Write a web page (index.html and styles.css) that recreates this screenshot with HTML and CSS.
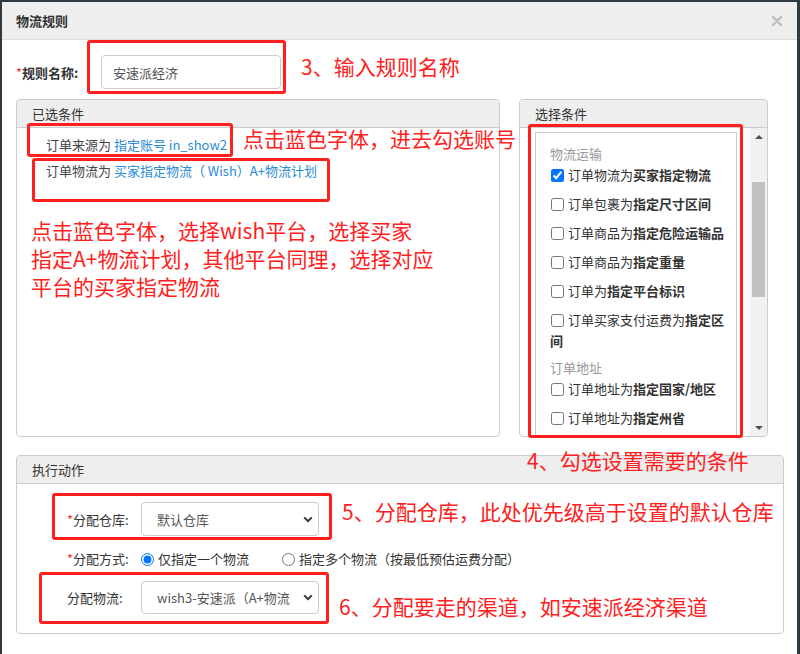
FILE: index.html
```html
<!DOCTYPE html>
<html lang="zh-CN">
<head>
<meta charset="utf-8">
<title>物流规则</title>
<link rel="stylesheet" href="styles.css">
</head>
<body>
<div class="dialog">
  <div class="dlg-header">
    <span class="dlg-title">物流规则</span>
    <svg class="dlg-close" width="10" height="10" viewBox="0 0 10 10"><path d="M1 1L9 9M9 1L1 9" stroke="#bdbdbd" stroke-width="2.4" stroke-linecap="round"/></svg>
  </div>
  <div class="dlg-body">
    <div class="name-row">
      <div class="name-label"><span class="req">*</span>规则名称:</div>
      <div class="name-input">安速派经济</div>
    </div>
    <div class="panels">
      <div class="panel panel-left">
        <div class="panel-head">已选条件</div>
        <div class="chosen">
          <div>订单来源为 <span class="link">指定账号 in_show2</span></div>
          <div>订单物流为 <span class="link">买家指定物流（ Wish）A+物流计划</span></div>
        </div>
      </div>
      <div class="panel panel-right">
        <div class="panel-head">选择条件</div>
        <div class="cond-body">
          <div class="cond-list">
            <div class="group">物流运输</div>
            <div class="item"><input type="checkbox" checked>订单物流为<b>买家指定物流</b></div>
            <div class="item"><input type="checkbox">订单包裹为<b>指定尺寸区间</b></div>
            <div class="item"><input type="checkbox">订单商品为<b>指定危险运输品</b></div>
            <div class="item"><input type="checkbox">订单商品为<b>指定重量</b></div>
            <div class="item"><input type="checkbox">订单为<b>指定平台标识</b></div>
            <div class="item"><input type="checkbox">订单买家支付运费为<b>指定区间</b></div>
            <div class="group group-2">订单地址</div>
            <div class="item"><input type="checkbox">订单地址为<b>指定国家/地区</b></div>
            <div class="item"><input type="checkbox">订单地址为<b>指定州省</b></div>
          </div>
          <div class="scrollbar">
            <div class="sb-btn"><span class="tri-up"></span></div>
            <div class="sb-thumb"></div>
            <div class="sb-fill"></div>
            <div class="sb-btn"><span class="tri-down"></span></div>
          </div>
        </div>
      </div>
    </div>
    <div class="panel panel-action">
      <div class="panel-head">执行动作</div>
      <div class="action-body">
        <div class="arow">
          <div class="alabel"><span class="req">*</span>分配仓库:</div>
          <div class="select"><span>默认仓库</span><svg width="10" height="7" viewBox="0 0 10 7"><path d="M1.2 1.4L5 5.2L8.8 1.4" fill="none" stroke="#333" stroke-width="2"/></svg></div>
        </div>
        <div class="arow arow-radio">
          <div class="alabel"><span class="req">*</span>分配方式:</div>
          <label class="radio"><input type="radio" name="m" checked>仅指定一个物流</label>
          <label class="radio radio-2"><input type="radio" name="m">指定多个物流（按最低预估运费分配）</label>
        </div>
        <div class="arow arow-last">
          <div class="alabel">分配物流:</div>
          <div class="select"><span>wish3-安速派（A+物流</span><svg width="10" height="7" viewBox="0 0 10 7"><path d="M1.2 1.4L5 5.2L8.8 1.4" fill="none" stroke="#333" stroke-width="2"/></svg></div>
        </div>
      </div>
    </div>
  </div>
</div>

<div class="mark box3"></div>
<div class="mark box1"></div>
<div class="mark box2"></div>
<div class="mark box4"></div>
<div class="mark box5"></div>
<div class="mark box6"></div>

<div class="note n3">3、输入规则名称</div>
<div class="note n1">点击蓝色字体，进去勾选账号</div>
<div class="note nbig">点击蓝色字体，选择wish平台，选择买家<br>指定A+物流计划，其他平台同理，选择对应<br>平台的买家指定物流</div>
<div class="note n4">4、勾选设置需要的条件</div>
<div class="note n5">5、分配仓库，此处优先级高于设置的默认仓库</div>
<div class="note n6">6、分配要走的渠道，如安速派经济渠道</div>
</body>
</html>
```

FILE: styles.css
```css
html, body {
  margin: 0;
  padding: 0;
}
body {
  background: #2e3a42;
  font-family: "Noto Sans CJK SC", "Open Sans", sans-serif;
  font-size: 13px;
  color: #333;
  width: 800px;
  height: 654px;
  overflow: hidden;
}
.dialog {
  margin: 2px 3px 0 2px;
  height: 652px;
  background: #fff;
  overflow: hidden;
}
.dlg-header {
  height: 37px;
  background: #eeeeee;
  border-bottom: 1px solid #dedede;
  display: flex;
  align-items: center;
  justify-content: space-between;
  padding: 0 15px 0 14px;
}
.dlg-title {
  font-weight: bold;
  color: #333;
}
.dlg-body {
  padding-left: 14px;
}
.req {
  color: #e33;
  font-weight: normal;
}
.name-row {
  display: flex;
  align-items: center;
  margin-top: 15px;
  height: 34px;
}
.name-label {
  width: 85px;
  font-weight: bold;
}
.name-input {
  width: 180px;
  height: 34px;
  box-sizing: border-box;
  border: 1px solid #cccccc;
  border-radius: 4px;
  padding-left: 11px;
  display: flex;
  align-items: center;
  color: #555;
}
.panels {
  display: flex;
  gap: 19px;
  margin-top: 10px;
  height: 338px;
}
.panel {
  border: 1px solid #cccccc;
  border-radius: 4px;
  box-sizing: border-box;
  overflow: hidden;
  display: flex;
  flex-direction: column;
}
.panel-left { width: 484px; }
.panel-right { width: 249px; }
.panel-head {
  height: 27px;
  line-height: 27px;
  background: #eeeeee;
  border-bottom: 1px solid #cccccc;
  padding-left: 15px;
  color: #333;
  flex: none;
}
.chosen {
  padding: 4px 0 0 29px;
  line-height: 26px;
  color: #444;
}
.link {
  color: #2a8bd4;
}
.cond-body {
  flex: 1;
  min-height: 0;
  display: flex;
}
.cond-list {
  width: 202px;
  box-sizing: border-box;
  margin: 4px 0 0 15px;
  border: 1px solid #cccccc;
  border-bottom: none;
  padding: 0 9px 0 14px;
  overflow: hidden;
  flex: none;
}
.group {
  color: #999;
  padding-top: 10px;
  line-height: 21px;
}
.group-2 {
  padding-top: 0;
  margin-top: -2px;
}
.item {
  line-height: 21px;
  margin-bottom: 8px;
  color: #333;
}
.item b {
  font-weight: bold;
}
.item input {
  width: 13px;
  height: 13px;
  margin: 0 4px 0 1px;
  vertical-align: -2px;
}
.scrollbar {
  width: 17px;
  margin-left: auto;
  background: #f1f1f1;
  display: flex;
  flex-direction: column;
}
.sb-btn {
  height: 17px;
  display: flex;
  align-items: center;
  justify-content: center;
  flex: none;
}
.tri-up {
  width: 0;
  height: 0;
  border-left: 4px solid transparent;
  border-right: 4px solid transparent;
  border-bottom: 4px solid #505050;
}
.tri-down {
  width: 0;
  height: 0;
  border-left: 4px solid transparent;
  border-right: 4px solid transparent;
  border-top: 4px solid #505050;
}
.sb-thumb {
  margin: 37px 2px 0 2px;
  height: 115px;
  background: #c1c1c1;
  flex: none;
}
.sb-fill { flex: 1; }
.panel-action {
  margin-top: 18px;
  width: 768px;
}
.action-body {
  padding: 18px 0 19px 50px;
}
.arow {
  display: flex;
  align-items: center;
  height: 34px;
}
.arow-radio {
  margin-top: 13px;
  height: 20px;
  line-height: 20px;
}
.arow-last {
  margin-top: 12px;
  height: 33px;
}
.alabel {
  width: 74px;
  color: #333;
}
.select {
  width: 178px;
  height: 100%;
  box-sizing: border-box;
  border: 1px solid #cccccc;
  border-radius: 4px;
  padding: 0 5px 0 15px;
  display: flex;
  align-items: center;
  justify-content: space-between;
  color: #555;
}
.radio {
  display: flex;
  align-items: center;
  color: #333;
}
.radio input {
  width: 13px;
  height: 13px;
  margin: 0 4px 0 0;
}
.radio-2 {
  margin-left: 33px;
}
.mark {
  position: absolute;
  box-sizing: border-box;
  border: 3px solid #ff1f1f;
  border-radius: 3px;
}
.box3 { left: 87px; top: 40px; width: 199px; height: 54px; }
.box1 { left: 27px; top: 123px; width: 206px; height: 34px; }
.box2 { left: 32px; top: 158px; width: 298px; height: 44px; }
.box4 { left: 528px; top: 124px; width: 215px; height: 314px; }
.box5 { left: 52px; top: 493px; width: 280px; height: 47px; }
.box6 { left: 39px; top: 572px; width: 290px; height: 52px; }
.note {
  position: absolute;
  color: #ff2020;
  font-size: 21px;
  line-height: 28px;
  white-space: nowrap;
}
.n3 { left: 301px; top: 52px; }
.n1 { left: 243px; top: 124px; }
.nbig { left: 31px; top: 216px; }
.n4 { left: 527px; top: 446px; }
.n5 { left: 342px; top: 497px; }
.n6 { left: 339px; top: 592px; }
```
